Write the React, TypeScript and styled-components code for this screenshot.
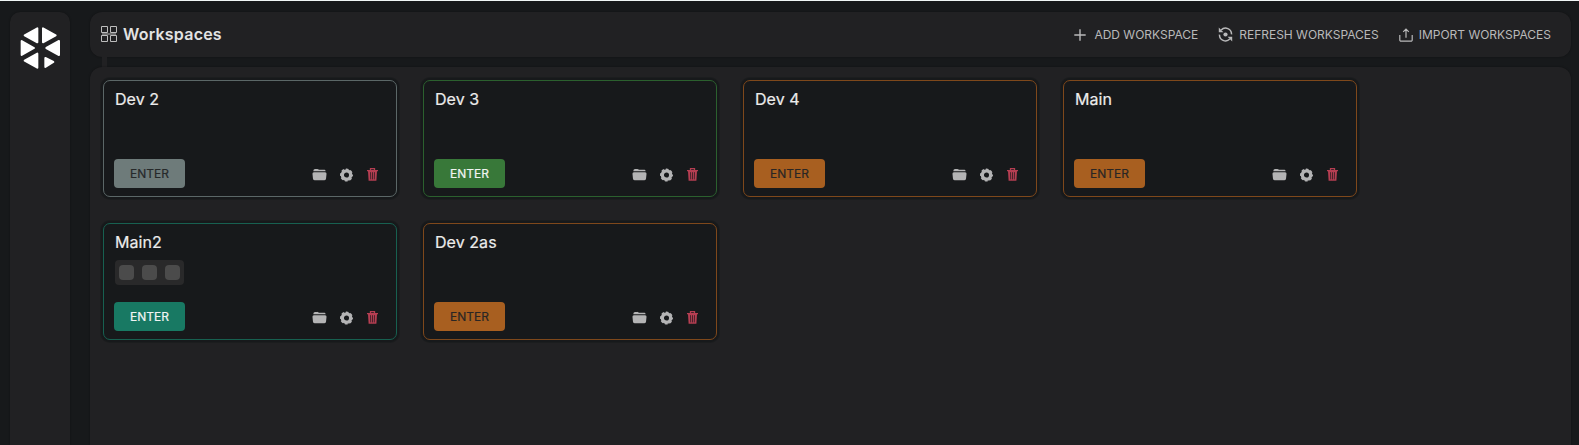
import React from "react";
import styled, { createGlobalStyle } from "styled-components";
import { IoFolderOpen } from "react-icons/io5";

const GlobalStyle = createGlobalStyle`
  * { box-sizing: border-box; }
  body {
    margin: 0;
    overflow: hidden;
    background: #17191b;
    font-family: Inter, "Liberation Sans", sans-serif;
    color: #e6e6e6;
  }
`;

const Shell = styled.div`
  display: flex;
  gap: 20px;
  height: 445px;
  padding: 11px 8px 0 10px;
  border-top: 1px solid #f0f6f6;
  background: #17191b;
`;

const surface = `
  background: #212123;
  box-shadow: 0 0 2px rgba(0, 0, 0, 0.4);
`;

const Sidebar = styled.aside`
  ${surface}
  flex: none;
  width: 60px;
  padding: 12px 8px;
  border-radius: 10px 10px 0 0;
`;

const Content = styled.div`
  display: flex;
  flex: 1;
  flex-direction: column;
`;

const Header = styled.header`
  ${surface}
  display: flex;
  align-items: center;
  justify-content: space-between;
  height: 45px;
  padding: 0 20px 0 11px;
  border-radius: 12px;
`;

const Connector = styled.div`
  width: 5px;
  height: 10px;
  margin-left: 12px;
  background: #212123;
`;

const Heading = styled.h1`
  display: flex;
  align-items: center;
  gap: 5px;
  margin: 0;
  font-size: 16px;
  font-weight: 600;
  line-height: 20px;
  letter-spacing: 0.22px;
  color: #e3e3e3;
  svg { display: block; }
`;

const HeadingText = styled.span`
  padding-bottom: 2px;
`;

const Actions = styled.nav`
  display: flex;
  gap: 20px;
`;

const Action = styled.button<{ $gap?: number }>`
  display: flex;
  align-items: center;
  gap: ${(p) => p.$gap ?? 6}px;
  padding: 0;
  border: 0;
  background: none;
  font: 400 12px/20px Inter, "Liberation Sans", sans-serif;
  letter-spacing: -0.01px;
  color: #b9b9ba;
  white-space: nowrap;
  svg { display: block; flex: none; }
`;

const Board = styled.main`
  ${surface}
  flex: 1;
  display: grid;
  grid-template-columns: repeat(4, 294px);
  grid-auto-rows: 117px;
  align-content: start;
  gap: 26px;
  padding: 13px;
  border-radius: 12px 12px 0 0;
`;

const Card = styled.article<{ $line: string }>`
  display: flex;
  flex-direction: column;
  padding: 7px 13px 8px 10px;
  border: 1px solid ${(p) => p.$line};
  border-radius: 7px;
  background: #17191b;
  box-shadow: 0 0 0 2px #17191b, 0 0 0 3px #1b1d1e;
`;

const Name = styled.h2`
  margin: 0 0 0 1px;
  font-size: 16px;
  font-weight: 400;
  line-height: 22px;
  letter-spacing: 0.06px;
  color: #ececec;
  -webkit-text-stroke: 0.2px #ececec;
`;

const Apps = styled.div`
  display: flex;
  gap: 8px;
  align-self: flex-start;
  margin: 7px 0 0 1px;
  padding: 5px 4px;
  border-radius: 4px;
  background: #29292a;
`;

const AppTile = styled.span`
  width: 15px;
  height: 15px;
  border-radius: 4px;
  background: #4b4b4b;
`;

const Footer = styled.footer`
  display: flex;
  align-items: center;
  justify-content: space-between;
  margin-top: auto;
`;

const Enter = styled.button<{ $fill: string; $ink: string }>`
  width: 71px;
  height: 29px;
  padding: 0;
  border: 0;
  border-radius: 4px;
  background: ${(p) => p.$fill};
  color: ${(p) => p.$ink};
  font: 400 12px/28px Inter, "Liberation Sans", sans-serif;
  -webkit-text-stroke: 0.2px ${(p) => p.$ink};
`;

const Tools = styled.div`
  display: flex;
  align-items: center;
  gap: 13px;
  padding: 2px 5px 0 0;
  color: #b4b4b5;
  svg { display: block; }
`;

const Logo = () => (
  <svg width="44" height="46" viewBox="54 72 132 138" fill="#fff" stroke="#fff" strokeWidth="6" strokeLinejoin="round">
    <path d="M112 85v42L74 106z" />
    <path d="M129 85v42l38-21z" />
    <path d="M65 123v42l37-21z" />
    <path d="M177 123v42l-38-21z" />
    <path d="M112 161v42l-38-21z" />
    <path d="M136 174v27l24-15z" />
  </svg>
);

const GridIcon = () => (
  <svg width="17" height="17" viewBox="0 0 17 17" fill="none" stroke="#bdbdbd">
    <path d="M1 8h14" strokeWidth="2" stroke="#6e6e6f" />
    <path d="M.5.5h6v6h-6zM9.5.5h6v6h-6zM.5 9.5h6v6h-6zM9.5 9.5h6v6h-6z" fill="#212123" />
  </svg>
);

const PlusIcon = () => (
  <svg width="12" height="12" viewBox="0 0 12 12" fill="none" stroke="currentColor" strokeWidth="1.4">
    <path d="M6 .3v11.4M.3 6h11.4" />
  </svg>
);

const RefreshIcon = () => (
  <svg width="15" height="15" viewBox="0 0 15 15" fill="none" stroke="currentColor" strokeWidth="1.5">
    <path d="M3.2 3A6 6 0 0 1 13.5 7.4M11.8 12A6 6 0 0 1 1.5 7.6" />
    <path d="M.8.6v4.6h4.6zM14.2 14.4V9.8H9.6z" fill="currentColor" stroke="none" />
    <circle cx="7.5" cy="7.5" r="2.1" fill="currentColor" stroke="none" />
  </svg>
);

const ImportIcon = () => (
  <svg width="14" height="14" viewBox="0 0 14 14" fill="none" stroke="currentColor" strokeWidth="1.2">
    <path d="M.8 7v5a1.2 1.2 0 0 0 1.2 1.2h10a1.2 1.2 0 0 0 1.2-1.2V7M7 9.8V1.2M4.2 3.9 7 1.1l2.8 2.8" />
  </svg>
);

const GearIcon = () => (
  <svg width="14" height="14" viewBox="0.5 0 14 14" fill="none" stroke="currentColor">
    <circle cx="7" cy="7" r="4.2" strokeWidth="3.3" />
    <circle cx="7" cy="7" r="5.8" strokeWidth="1.4" strokeDasharray="2.7 1.855" strokeDashoffset="1.35" />
  </svg>
);

const TrashIcon = () => (
  <svg width="11" height="13" viewBox="0 0 11 13" fill="none" stroke="#b53e52">
    <path d="M0 2.6h11M3.5 2.4V.6h4v1.8" strokeWidth="1.3" />
    <path d="M1 2.6h9l-.6 10.2H1.6z" fill="#b53e52" stroke="none" />
    <path d="M3.5 4.2l.2 7.2M5.5 4.2v7.2M7.5 4.2l-.2 7.2" stroke="#2c1c21" strokeWidth=".8" />
  </svg>
);

type Workspace = { name: string; line: string; fill: string; ink: string; apps?: number };

const orange = { line: "#7e481b", fill: "#a85f20", ink: "#2a2624" };

const workspaces: Workspace[] = [
  { name: "Dev 2", line: "#5b6767", fill: "#6e7b7a", ink: "#26292a" },
  { name: "Dev 3", line: "#2b602e", fill: "#387839", ink: "#f1f4f1" },
  { name: "Dev 4", ...orange },
  { name: "Main", ...orange },
  { name: "Main2", line: "#176050", fill: "#187963", ink: "#f1f4f3", apps: 3 },
  { name: "Dev 2as", ...orange },
];

const WorkspaceCard = ({ name, line, fill, ink, apps }: Workspace) => (
  <Card $line={line}>
    <Name>{name}</Name>
    {apps && (
      <Apps>
        {Array.from({ length: apps }, (_, i) => (
          <AppTile key={i} />
        ))}
      </Apps>
    )}
    <Footer>
      <Enter $fill={fill} $ink={ink}>ENTER</Enter>
      <Tools>
        <IoFolderOpen size={15} />
        <GearIcon />
        <TrashIcon />
      </Tools>
    </Footer>
  </Card>
);

export default function App() {
  return (
    <>
      <GlobalStyle />
      <Shell>
        <Sidebar>
          <Logo />
        </Sidebar>
        <Content>
          <Header>
            <Heading>
              <GridIcon />
              <HeadingText>Workspaces</HeadingText>
            </Heading>
            <Actions>
              <Action $gap={8}><PlusIcon />ADD WORKSPACE</Action>
              <Action><RefreshIcon />REFRESH WORKSPACES</Action>
              <Action><ImportIcon />IMPORT WORKSPACES</Action>
            </Actions>
          </Header>
          <Connector />
          <Board>
            {workspaces.map((w) => (
              <WorkspaceCard key={w.name} {...w} />
            ))}
          </Board>
        </Content>
      </Shell>
    </>
  );
}
